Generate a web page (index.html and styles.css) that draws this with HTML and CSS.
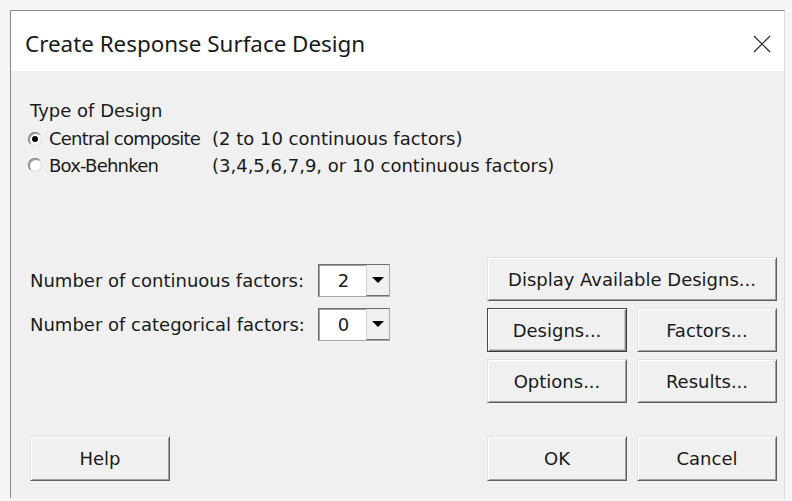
FILE: index.html
```html
<!DOCTYPE html>
<html lang="en">
<head>
<meta charset="utf-8">
<title>Create Response Surface Design</title>
<link rel="stylesheet" href="styles.css">
</head>
<body>
<div class="window">
  <header class="titlebar">
    <span class="title">Create Response Surface Design</span>
    <svg class="close" width="18" height="18" viewBox="0 0 18 18" aria-label="Close">
      <path d="M1 1L17 17M17 1L1 17" stroke="#222" stroke-width="1.2" fill="none"/>
    </svg>
  </header>

  <main class="content">
    <section class="design-type">
      <div class="group-label">Type of Design</div>
      <div class="option">
        <span class="radio checked"></span>
        <span class="opt-name">Central composite</span>
        <span class="opt-note">(2 to 10 continuous factors)</span>
      </div>
      <div class="option last">
        <span class="radio"></span>
        <span class="opt-name">Box-Behnken</span>
        <span class="opt-note">(3,4,5,6,7,9, or 10 continuous factors)</span>
      </div>
    </section>

    <section class="middle">
      <div class="factor-fields">
        <div class="field">
          <span class="field-label">Number of continuous factors:</span>
          <div class="combo"><span class="combo-value">2</span><span class="combo-arrow"><i class="tri"></i></span></div>
        </div>
        <div class="field">
          <span class="field-label">Number of categorical factors:</span>
          <div class="combo"><span class="combo-value">0</span><span class="combo-arrow"><i class="tri"></i></span></div>
        </div>
      </div>

      <div class="action-grid">
        <button class="btn wide">Display Available Designs...</button>
        <button class="btn default">Designs...</button>
        <button class="btn">Factors...</button>
        <button class="btn">Options...</button>
        <button class="btn">Results...</button>
      </div>
    </section>

    <footer class="footer">
      <button class="btn">Help</button>
      <div class="footer-right">
        <button class="btn">OK</button>
        <button class="btn">Cancel</button>
      </div>
    </footer>
  </main>
</div>
</body>
</html>
```

FILE: styles.css
```css
html, body {
  margin: 0;
  height: 100%;
}

body {
  background: #f5f5f5;
  padding: 10px 0 0 10px;
  box-sizing: border-box;
  font-family: "DejaVu Sans", "Noto Sans", sans-serif;
  font-size: 18px;
  color: #1a1a1a;
}

/* dialog frame */
.window {
  width: 775px;
  height: 488px;
  box-sizing: border-box;
  border-top: 1px solid #8a8a8a;
  border-left: 1px solid #8a8a8a;
  border-right: 1px solid #dadada;
  background: #f0f0f0;
  display: flex;
  flex-direction: column;
}

.titlebar {
  height: 60px;
  flex: none;
  background: #ffffff;
  display: flex;
  align-items: center;
  justify-content: space-between;
  padding: 0 13px 0 14px;
}

.title {
  font-family: "Noto Sans", "Open Sans", sans-serif;
  font-size: 22.4px;
  color: #1a1a1a;
  padding-top: 4px;
}

.close {
  display: block;
  margin-top: 5px;
}

.content {
  flex: 1;
  display: flex;
  flex-direction: column;
  padding: 26px 7px 0 19px;
}

/* design type radio group */
.group-label {
  height: 28px;
  line-height: 28px;
}

.option {
  height: 27px;
  display: flex;
  align-items: center;
}

.option.last {
  height: 26px;
}

.radio {
  width: 14px;
  height: 14px;
  box-sizing: border-box;
  margin: 0 7px 0 -2px;
  border-radius: 50%;
  border: 1px solid;
  border-color: #707070 #dcdcdc #dcdcdc #707070;
  box-shadow: inset 1px 1px 0 #a0a0a0;
  background: #ffffff;
  display: flex;
  align-items: center;
  justify-content: center;
}

.radio.checked::after {
  content: "";
  width: 6px;
  height: 6px;
  border-radius: 50%;
  background: #000;
}

.opt-name {
  width: 163px;
  letter-spacing: -0.8px;
}

/* factor counts and design buttons */
.middle {
  display: flex;
  justify-content: space-between;
  margin-top: 79px;
}

.factor-fields {
  display: flex;
  flex-direction: column;
  gap: 11px;
  padding-top: 7px;
}

.field {
  display: flex;
  align-items: center;
}

.field-label {
  width: 288px;
}

.combo {
  width: 72px;
  height: 33px;
  box-sizing: border-box;
  display: flex;
  border: 1px solid;
  border-color: #6e6e6e #a8a8a8 #a8a8a8 #6e6e6e;
  box-shadow: inset 1px 1px 0 #a0a0a0;
  background: #ffffff;
}

.combo-value {
  flex: 1;
  text-align: center;
  line-height: 31px;
  padding-left: 2px;
}

.combo-arrow {
  width: 22px;
  background: #f0f0f0;
  border-left: 1px solid #d6d6d6;
  border-bottom: 1px solid #6e6e6e;
  display: flex;
  align-items: center;
  justify-content: center;
}

.tri {
  width: 0;
  height: 0;
  border-left: 6px solid transparent;
  border-right: 6px solid transparent;
  border-top: 6px solid #000;
}

.action-grid {
  display: grid;
  grid-template-columns: 140px 140px;
  grid-auto-rows: 44px;
  column-gap: 10px;
  row-gap: 7px;
}

.btn {
  font-family: "DejaVu Sans", "Noto Sans", sans-serif;
  font-size: 18px;
  color: #1a1a1a;
  background: #f0f0f0;
  border: 1px solid;
  border-color: #e3e3e3 #5e5e5e #5e5e5e #e3e3e3;
  box-shadow: inset 1px 1px 0 #ffffff, inset -1px -1px 0 #a0a0a0;
  padding: 0;
  margin: 0;
  width: 140px;
  height: 44px;
}

.wide {
  grid-column: 1 / span 2;
  width: 290px;
}

.btn.default {
  border-color: #4a4a4a #3a3a3a #3a3a3a #4a4a4a;
  box-shadow: inset 1px 1px 0 #ffffff, inset -1px -1px 0 #8c8c8c, inset -2px -2px 0 #c4c4c4;
}

/* bottom row */
.footer {
  display: flex;
  justify-content: space-between;
  margin-top: 33px;
}

.footer .btn {
  height: 45px;
}

.footer-right {
  display: flex;
  gap: 10px;
}
```
